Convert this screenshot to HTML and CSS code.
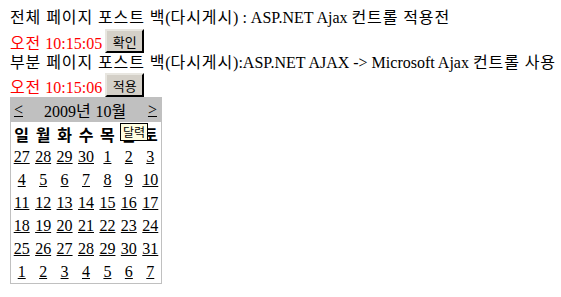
FILE: index.html
```html
<!DOCTYPE html>
<html lang="ko">
<head>
  <meta charset="UTF-8" />
  <title>포스트 백 비교</title>
  <link rel="stylesheet" href="styles.css">
</head>
<body>
  <div class="text-line"><span class="ko">전체 페이지 포스트 백</span>(<span class="ko">다시게시</span>) : ASP.NET Ajax <span class="ko">컨트롤 적용전</span></div>
  <div class="time-line">
    <span class="time"><span class="ko">오전</span> 10:15:05</span>
    <button class="btn">확인</button>
  </div>
  <div class="text-line"><span class="ko">부분 페이지 포스트 백</span>(<span class="ko">다시게시</span>):ASP.NET AJAX -&gt; Microsoft Ajax <span class="ko">컨트롤 사용</span></div>
  <div class="time-line last">
    <span class="time"><span class="ko">오전</span> 10:15:06</span>
    <button class="btn">적용</button>
  </div>

  <div class="calendar" title="달력">
    <div class="cal-title">
      <a href="#">&lt;</a>
      <span>2009<span class="ko">년</span> 10<span class="ko">월</span></span>
      <a href="#">&gt;</a>
    </div>
    <div class="cal-grid">
      <div class="day-name">일</div>
      <div class="day-name">월</div>
      <div class="day-name">화</div>
      <div class="day-name">수</div>
      <div class="day-name">목</div>
      <div class="day-name">금</div>
      <div class="day-name">토</div>

      <a href="#">27</a><a href="#">28</a><a href="#">29</a><a href="#">30</a><a href="#">1</a><a href="#">2</a><a href="#">3</a>
      <a href="#">4</a><a href="#">5</a><a href="#">6</a><a href="#">7</a><a href="#">8</a><a href="#">9</a><a href="#">10</a>
      <a href="#">11</a><a href="#">12</a><a href="#">13</a><a href="#">14</a><a href="#">15</a><a href="#">16</a><a href="#">17</a>
      <a href="#">18</a><a href="#">19</a><a href="#">20</a><a href="#">21</a><a href="#">22</a><a href="#">23</a><a href="#">24</a>
      <a href="#">25</a><a href="#">26</a><a href="#">27</a><a href="#">28</a><a href="#">29</a><a href="#">30</a><a href="#">31</a>
      <a href="#">1</a><a href="#">2</a><a href="#">3</a><a href="#">4</a><a href="#">5</a><a href="#">6</a><a href="#">7</a>
    </div>
    <div class="tooltip">달력</div>
  </div>
</body>
</html>
```

FILE: styles.css
```css
body {
  margin: 8px 0 8px 10px;
  font-family: "Liberation Serif", "Noto Sans CJK KR", serif;
  font-size: 16px;
  color: #000;
  background-color: #fff;
}

/* hangul in Noto is narrower than Gulim, widen it a bit */
.ko {
  letter-spacing: 0.9px;
}

.text-line {
  height: 19px;
  line-height: 19px;
  white-space: nowrap;
}

.time-line {
  height: 26px;
  display: flex;
  align-items: flex-end;
}

.time-line.last {
  height: 25px;
}

.time {
  color: #ff0000;
  line-height: 19px;
  white-space: nowrap;
}

.btn {
  width: 39px;
  height: 24px;
  margin-left: 3px;
  padding: 0;
  font-family: "Noto Sans CJK KR", sans-serif;
  font-size: 13px;
  color: #000;
  background-color: #d4d0c8;
  border: 2px outset #e8e6e0;
  border-right-color: #404040;
  border-bottom-color: #404040;
}

.calendar {
  position: relative;
  width: 150px;
  border: 1px solid #c0c0c0;
}

.cal-title {
  height: 24px;
  display: flex;
  justify-content: space-between;
  align-items: center;
  padding: 0 4px 0 3px;
  background-color: #c0c0c0;
}

.cal-title a,
.cal-grid a {
  color: #000;
  text-decoration: underline;
}

.cal-grid {
  display: grid;
  grid-template-columns: repeat(7, 1fr);
  grid-auto-rows: 23px;
  align-items: center;
  text-align: center;
}

.day-name {
  font-family: "Noto Sans CJK KR", sans-serif;
  font-weight: bold;
  font-size: 16px;
}

.cal-grid a {
  justify-self: center;
  line-height: 18px;
}

.tooltip {
  position: absolute;
  left: 109px;
  top: 25px;
  padding: 0 2px;
  font-family: "Noto Sans CJK KR", sans-serif;
  font-size: 12px;
  line-height: 16px;
  background-color: #ffffe1;
  border: 1px solid #000;
}
```
